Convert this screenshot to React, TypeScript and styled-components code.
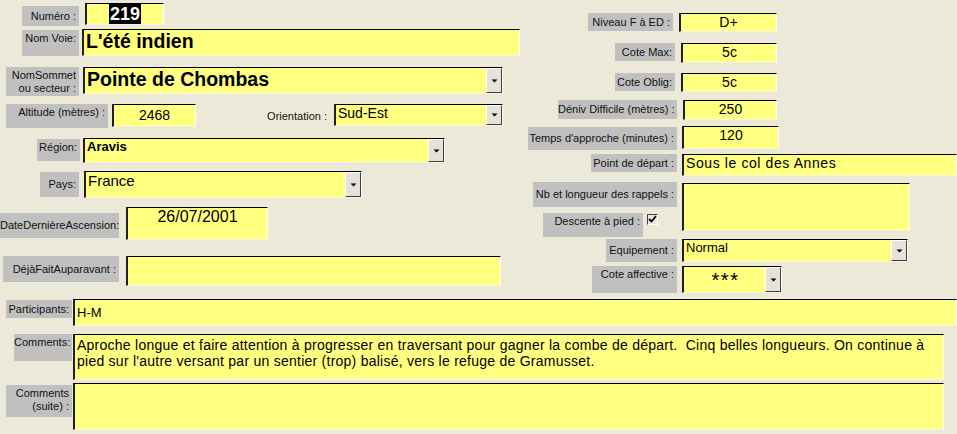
import React from 'react';
import styled, { createGlobalStyle } from 'styled-components';

const GlobalStyle = createGlobalStyle`
  html, body {
    margin: 0;
    padding: 0;
    background: #ece9d8;
  }
`;

const Form = styled.div`
  width: 957px;
  height: 434px;
  overflow: hidden;
  background: #ece9d8;
  font-family: 'Liberation Sans', Arial, sans-serif;
  color: #000;
`;

const Top = styled.div`
  display: flex;
  height: 299px;
`;

const Column = styled.div<{ $w: number; $pt: number }>`
  width: ${(p) => p.$w}px;
  flex: none;
  padding-top: ${(p) => p.$pt}px;
  box-sizing: border-box;
`;

const Row = styled.div<{ $h: number }>`
  display: flex;
  align-items: flex-start;
  height: ${(p) => p.$h}px;
`;

const Label = styled.div<{
  $ml: number;
  $w: number;
  $h: number;
  $mt?: number;
  $top?: boolean;
}>`
  flex: none;
  box-sizing: border-box;
  margin-left: ${(p) => p.$ml}px;
  margin-top: ${(p) => p.$mt ?? 0}px;
  width: ${(p) => p.$w}px;
  height: ${(p) => p.$h}px;
  background: #c0c0c0;
  font-size: 11px;
  line-height: 13px;
  text-align: right;
  white-space: nowrap;
  padding: ${(p) => (p.$top ? '2px' : '0')} 3px 0 0;
  display: flex;
  flex-direction: column;
  justify-content: ${(p) => (p.$top ? 'flex-start' : 'center')};
  color: #111;
`;

const PlainLabel = styled.div<{ $ml: number; $w: number; $mt: number }>`
  flex: none;
  margin-left: ${(p) => p.$ml}px;
  margin-top: ${(p) => p.$mt}px;
  width: ${(p) => p.$w}px;
  font-size: 11px;
  line-height: 13px;
  text-align: right;
  white-space: nowrap;
  color: #111;
`;

const Field = styled.div<{
  $ml: number;
  $w: number;
  $h: number;
  $mt?: number;
  $pt?: number;
  $size?: number;
  $bold?: boolean;
  $center?: boolean;
  $spacing?: number;
}>`
  flex: none;
  box-sizing: border-box;
  margin-left: ${(p) => p.$ml}px;
  margin-top: ${(p) => p.$mt ?? 0}px;
  width: ${(p) => p.$w}px;
  height: ${(p) => p.$h}px;
  background: #ffff80;
  border-style: solid;
  border-width: 1px 1px 1px 2px;
  border-color: #000 #fff #f4f4e8 #202020;
  font-size: ${(p) => p.$size ?? 13}px;
  font-weight: ${(p) => (p.$bold ? 700 : 400)};
  letter-spacing: ${(p) => p.$spacing ?? 0}px;
  line-height: ${(p) => Math.round((p.$size ?? 13) * 1.15)}px;
  text-align: ${(p) => (p.$center ? 'center' : 'left')};
  padding: ${(p) => p.$pt ?? 0}px 2px 0;
  white-space: nowrap;
  overflow: hidden;
`;

const Memo = styled(Field)`
  white-space: pre-wrap;
  line-height: 16px;
  padding-top: 2px;
`;

const Combo = styled(Field)`
  display: flex;
  align-items: stretch;
  padding: 0;
`;

const ComboText = styled.div<{ $center?: boolean }>`
  flex: 1;
  padding-left: 2px;
  text-align: ${(p) => (p.$center ? 'center' : 'left')};
  overflow: hidden;
`;

const DropButton = styled.div`
  flex: none;
  width: 16px;
  box-sizing: border-box;
  background: #e4e2da;
  border-style: solid;
  border-width: 1px;
  border-color: #fff #404040 #404040 #fff;
  display: flex;
  align-items: center;
  justify-content: center;
`;

const Selected = styled.span`
  background: #000;
  color: #fff;
  padding: 0 1px;
`;

const Stars = styled.div`
  font-size: 20px;
  line-height: 23px;
  letter-spacing: 1.5px;
  padding-top: 2px;
`;

const LabelStack = styled.div`
  flex: none;
  width: 157px;
  display: flex;
  flex-direction: column;
`;

const CheckRow = styled.div`
  display: flex;
  align-items: flex-start;
  margin-top: 6px;
`;

const CheckBox = styled.div`
  flex: none;
  margin: 1px 0 0 4px;
  width: 11px;
  height: 11px;
  box-sizing: border-box;
  border-style: solid;
  border-width: 1px;
  border-color: #404040 #fff #fff #404040;
  display: flex;
  align-items: center;
  justify-content: center;
`;

const Bottom = styled.div`
  display: flex;
  flex-direction: column;
`;

const Arrow = () => (
  <svg width="7" height="4" viewBox="0 0 7 4">
    <path d="M0.5 0.5h6L3.5 3.5z" fill="#000" />
  </svg>
);

const Check = () => (
  <svg width="9" height="9" viewBox="0 0 9 9">
    <path d="M1 4l2.5 2.5L8 1" stroke="#000" strokeWidth="1.8" fill="none" />
  </svg>
);

type DropProps = {
  ml: number;
  w: number;
  h: number;
  mt?: number;
  size?: number;
  bold?: boolean;
  center?: boolean;
  children?: React.ReactNode;
};

const Dropdown: React.FC<DropProps> = ({ ml, w, h, mt, size, bold, center, children }) => (
  <Combo $ml={ml} $w={w} $h={h} $mt={mt} $size={size} $bold={bold}>
    <ComboText $center={center}>{children}</ComboText>
    <DropButton>
      <Arrow />
    </DropButton>
  </Combo>
);

const comments =
  "Aproche longue et faire attention à progresser en traversant pour gagner la combe de départ.  Cinq belles longueurs. On continue à pied sur l'autre versant par un sentier (trop) balisé, vers le refuge de Gramusset.";

const App: React.FC = () => {
  return (
    <>
      <GlobalStyle />
      <Form>
        <Top>
          <Column $w={520} $pt={3}>
            <Row $h={26}>
              <Label $ml={22} $w={57} $h={20} $mt={3}>Numéro :</Label>
              <Field $ml={6} $w={79} $h={22} $size={18} $bold $center>
                <Selected>219</Selected>
              </Field>
            </Row>
            <Row $h={38}>
              <Label $ml={22} $w={57} $h={26} $mt={1} $top>Nom Voie:</Label>
              <Field $ml={3} $w={438} $h={27} $size={19.5} $bold>
                L'été indien
              </Field>
            </Row>
            <Row $h={37}>
              <Label $ml={6} $w={73} $h={29} $top>
                <span>NomSommet</span>
                <span>ou secteur :</span>
              </Label>
              <Dropdown ml={4} w={420} h={27} size={19.5} bold>
                Pointe de Chombas
              </Dropdown>
            </Row>
            <Row $h={34}>
              <Label $ml={6} $w={102} $h={24} $top>Altitude (mètres) :</Label>
              <Field $ml={4} $w={84} $h={23} $pt={2} $size={14} $center>
                2468
              </Field>
              <PlainLabel $ml={70} $w={61} $mt={6}>Orientation :</PlainLabel>
              <Dropdown ml={7} w={169} h={22} size={14}>
                Sud-Est
              </Dropdown>
            </Row>
            <Row $h={33}>
              <Label $ml={37} $w={43} $h={22} $mt={1} $top>Région:</Label>
              <Dropdown ml={3} w={362} h={25} size={13} bold>
                Aravis
              </Dropdown>
            </Row>
            <Row $h={36}>
              <Label $ml={40} $w={39} $h={25} $mt={1}>Pays:</Label>
              <Dropdown ml={5} w={278} h={27} size={15}>
                France
              </Dropdown>
            </Row>
            <Row $h={49}>
              <Label $ml={0} $w={119} $h={25} $mt={6}>DateDernièreAscension:</Label>
              <Field $ml={7} $w={142} $h={33} $size={16} $center>
                26/07/2001
              </Field>
            </Row>
            <Row $h={43}>
              <Label $ml={3} $w={116} $h={26}>DéjàFaitAuparavant :</Label>
              <Field $ml={7} $w={375} $h={30} />
            </Row>
          </Column>

          <Column $w={437} $pt={13}>
            <Row $h={30}>
              <Label $ml={68} $w={85} $h={18}>Niveau F à ED :</Label>
              <Field $ml={6} $w={98} $h={19} $size={14} $center>D+</Field>
            </Row>
            <Row $h={30}>
              <Label $ml={95} $w={60} $h={18}>Cote Max:</Label>
              <Field $ml={6} $w={96} $h={20} $size={14} $center>5c</Field>
            </Row>
            <Row $h={27}>
              <Label $ml={95} $w={60} $h={18}>Cote Oblig:</Label>
              <Field $ml={6} $w={96} $h={19} $size={14} $center>5c</Field>
            </Row>
            <Row $h={26}>
              <Label $ml={38} $w={119} $h={19}>Déniv Difficile (mètres) :</Label>
              <Field $ml={6} $w={94} $h={20} $size={14} $center>250</Field>
            </Row>
            <Row $h={28}>
              <Label $ml={8} $w={149} $h={23} $mt={1}>Temps d'approche (minutes) :</Label>
              <Field $ml={5} $w={97} $h={23} $size={14} $center>120</Field>
            </Row>
            <Row $h={28}>
              <Label $ml={71} $w={86} $h={18}>Point de départ :</Label>
              <Field $ml={5} $w={275} $h={22} $size={14} $spacing={0.6}>
                Sous le col des Annes
              </Field>
            </Row>
            <Row $h={57}>
              <LabelStack>
                <Label $ml={13} $w={144} $h={25}>Nb et longueur des rappels :</Label>
                <CheckRow>
                  <Label $ml={23} $w={100} $h={24} $top>Descente à pied :</Label>
                  <CheckBox>
                    <Check />
                  </CheckBox>
                </CheckRow>
              </LabelStack>
              <Field $ml={5} $w={228} $h={48} $mt={1} />
            </Row>
            <Row $h={27}>
              <Label $ml={86} $w={71} $h={23}>Equipement :</Label>
              <Dropdown ml={5} w={226} h={23} size={13}>
                Normal
              </Dropdown>
            </Row>
            <Row $h={33}>
              <Label $ml={72} $w={85} $h={27} $top>Cote affective :</Label>
              <Dropdown ml={5} w={100} h={27} size={13} center>
                <Stars>***</Stars>
              </Dropdown>
            </Row>
          </Column>
        </Top>

        <Bottom>
          <Row $h={35}>
            <Label $ml={6} $w={66} $h={18} $mt={1}>Participants:</Label>
            <Field $ml={1} $w={884} $h={27} $pt={5} $size={13}>H-M</Field>
          </Row>
          <Row $h={49}>
            <Label $ml={14} $w={58} $h={27} $top>Comments:</Label>
            <Memo $ml={1} $w={871} $h={46} $size={14} $spacing={0.25}>
              {comments}
            </Memo>
          </Row>
          <Row $h={51}>
            <Label $ml={6} $w={66} $h={32} $mt={2} $top>
              <span>Comments</span>
              <span>(suite) :</span>
            </Label>
            <Memo $ml={1} $w={871} $h={47} $size={13} />
          </Row>
        </Bottom>
      </Form>
    </>
  );
};

export default App;
